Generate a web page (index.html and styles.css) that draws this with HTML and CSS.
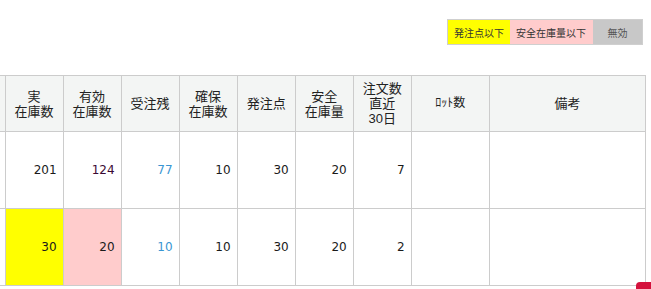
FILE: index.html
```html
<!DOCTYPE html>
<html lang="ja">
<head>
<meta charset="utf-8">
<link rel="stylesheet" href="styles.css">
</head>
<body>
<div class="legend">
  <span class="lg lg-yellow">発注点以下</span>
  <span class="lg lg-pink">安全在庫量以下</span>
  <span class="lg lg-gray">無効</span>
</div>
<table class="stock">
  <thead>
    <tr>
      <th class="cut"></th>
      <th class="c">実<br>在庫数</th>
      <th class="c">有効<br>在庫数</th>
      <th class="c">受注残</th>
      <th class="c">確保<br>在庫数</th>
      <th class="c">発注点</th>
      <th class="c">安全<br>在庫量</th>
      <th class="c">注文数<br>直近<br>30日</th>
      <th class="lot">ﾛｯﾄ数</th>
      <th class="memo">備考</th>
    </tr>
  </thead>
  <tbody>
    <tr>
      <td class="cut"></td>
      <td class="n">201</td>
      <td class="n maroon">124</td>
      <td class="n blue">77</td>
      <td class="n">10</td>
      <td class="n">30</td>
      <td class="n">20</td>
      <td class="n">7</td>
      <td></td>
      <td></td>
    </tr>
    <tr>
      <td class="cut"></td>
      <td class="n yellow">30</td>
      <td class="n pink">20</td>
      <td class="n blue">10</td>
      <td class="n">10</td>
      <td class="n">30</td>
      <td class="n">20</td>
      <td class="n">2</td>
      <td></td>
      <td></td>
    </tr>
  </tbody>
</table>
<div class="pagetop"></div>
</body>
</html>
```
FILE: styles.css
```css
html, body {
  margin: 0;
  padding: 0;
  background: #fff;
}
body {
  font-family: "DejaVu Sans", "Noto Sans CJK JP", sans-serif;
  color: #1a1a1a;
  overflow: hidden;
  width: 651px;
  height: 289px;
}
.legend {
  display: flex;
  justify-content: flex-end;
  padding: 19px 8px 0 0;
}
.lg {
  display: flex;
  align-items: center;
  height: 26px;
  box-sizing: border-box;
  border-top: 1px solid #cfcfcf;
  border-bottom: 1px solid #cfcfcf;
  font-family: "Noto Sans CJK JP", sans-serif;
  font-size: 10px;
  color: #333;
}
.lg-yellow {
  background: #ffff00;
  width: 63px;
  padding-left: 6px;
  border-left: 1px solid #cfcfcf;
}
.lg-pink {
  background: #ffcccc;
  width: 83px;
  padding-left: 6px;
}
.lg-gray {
  background: #c8c8c8;
  width: 50px;
  justify-content: center;
  border-right: 1px solid #cfcfcf;
  color: #555;
}
.stock {
  margin-top: 30px;
  border-collapse: collapse;
  table-layout: fixed;
  width: 646px;
}
.stock th, .stock td {
  border: 1px solid #cccccc;
  padding: 0;
}
.stock th {
  background: #f3f5f4;
  font-family: "Liberation Sans", "Noto Sans CJK JP", sans-serif;
  font-weight: normal;
  font-size: 13px;
  line-height: 15px;
  color: #222;
  text-align: center;
  vertical-align: middle;
  height: 56px;
  box-sizing: border-box;
}
.stock th.lot {
  font-size: 12px;
}
.stock td {
  height: 77px;
  box-sizing: border-box;
  font-size: 12px;
  text-align: right;
  vertical-align: middle;
  padding-right: 6px;
}
.stock .cut {
  width: 5px;
  border-left: none;
  padding: 0;
}
.stock .c { width: 58px; }
.stock .lot { width: 78px; }
.stock .memo { width: 156px; }
.maroon { color: #3a0833; }
.blue { color: #3a96d2; }
.yellow { background: #ffff00; }
.pink { background: #ffcccc; }
.pagetop {
  position: absolute;
  right: 0;
  bottom: 0;
  width: 15px;
  height: 7px;
  background: #d4113c;
  border-top-left-radius: 4px;
}
```
